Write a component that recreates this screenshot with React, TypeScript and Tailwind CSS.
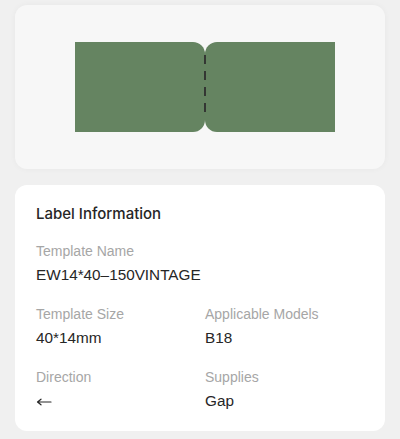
import React from "react";

const font = { fontFamily: '"Liberation Sans", Arial, sans-serif' };

function Field({ label, value }: { label: string; value: React.ReactNode }) {
  return (
    <div className="flex flex-col">
      <div className="text-[14px] leading-[18px] text-[#a6a6a6]">{label}</div>
      <div className="mt-[4px] flex h-[22px] items-center text-[15.3px] leading-[22px] text-[#262626]">{value}</div>
    </div>
  );
}

function LeftArrow() {
  return (
    <svg width="16" height="10" viewBox="0 0 16 10" className="mt-[1px]">
      <path d="M1.5 5H15M1.5 5L5 2.2M1.5 5L5 7.8" stroke="#262626" strokeWidth="1.2" fill="none" strokeLinecap="round" />
    </svg>
  );
}

export default function App() {
  return (
    <div className="min-h-[439px] w-[400px] bg-[#f0f0f0] px-[15px] pt-[5px] pb-[9px]" style={font}>
      {/* Preview */}
      <div className="flex h-[164px] items-center justify-center rounded-[12px] bg-[#f7f7f7] pl-[10px] shadow-[0_0_6px_rgba(0,0,0,0.04)]">
        <div className="relative flex h-[90px]">
          <div className="h-full w-[130px] rounded-r-[12px] bg-[#658461]" />
          <div className="h-full w-[130px] rounded-l-[12px] bg-[#658461]" />
          <svg
            className="absolute left-[129px] top-[13px]"
            width="2"
            height="64"
            viewBox="0 0 2 64"
          >
            <line x1="1" y1="0" x2="1" y2="64" stroke="#2f2f2f" strokeWidth="1.8" strokeDasharray="9 7" />
          </svg>
        </div>
      </div>

      {/* Info */}
      <div className="mt-[16px] rounded-[12px] bg-white px-[21px] pt-[19px] pb-[19px]">
        <div
          className="text-[15px] leading-[20px] font-medium text-[#262626]"
          style={{ fontFamily: 'Inter, "Liberation Sans", sans-serif' }}
        >
          Label Information
        </div>
        <div className="mt-[18px]">
          <Field label="Template Name" value="EW14*40–150VINTAGE" />
        </div>
        <div className="mt-[19px] grid grid-cols-[169px_1fr]">
          <Field label="Template Size" value="40*14mm" />
          <Field label="Applicable Models" value="B18" />
        </div>
        <div className="mt-[19px] grid grid-cols-[169px_1fr]">
          <Field label="Direction" value={<LeftArrow />} />
          <Field label="Supplies" value="Gap" />
        </div>
      </div>
    </div>
  );
}
